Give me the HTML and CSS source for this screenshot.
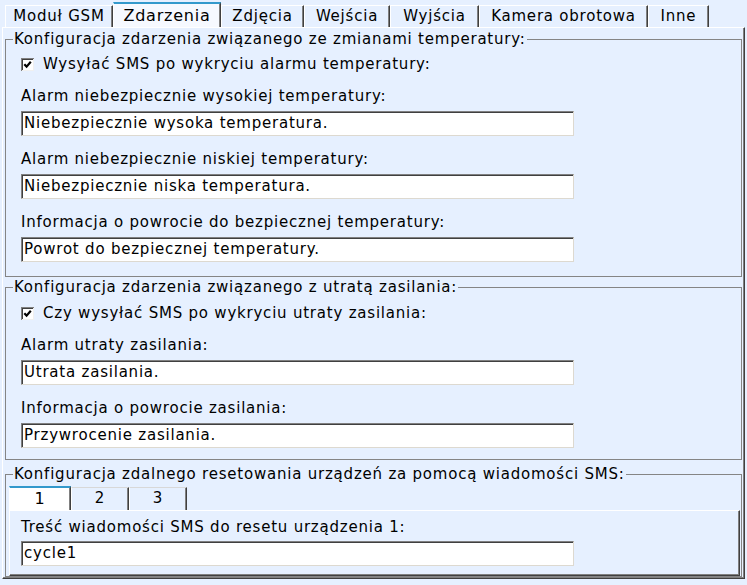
FILE: index.html
```html
<!DOCTYPE html>
<html lang="pl">
<head>
<meta charset="utf-8">
<title>Zdarzenia</title>
<link rel="stylesheet" href="styles.css">
</head>
<body>
<div class="tabs">
  <div class="tab t-gsm">Moduł GSM</div>
  <div class="tab t-events active">Zdarzenia</div>
  <div class="tab t-photos">Zdjęcia</div>
  <div class="tab t-inputs">Wejścia</div>
  <div class="tab t-outputs">Wyjścia</div>
  <div class="tab t-camera">Kamera obrotowa</div>
  <div class="tab t-other">Inne</div>
</div>
<div class="panel">
  <fieldset class="group g1">
    <legend>Konfiguracja zdarzenia związanego ze zmianami temperatury:</legend>
    <div class="body">
      <div class="check">
        <svg class="box" width="13" height="13" viewBox="0 0 13 13"><rect x="0" y="0" width="13" height="13" fill="#808080"/><rect x="1" y="1" width="12" height="12" fill="#f0f0f0"/><rect x="1" y="1" width="11" height="11" fill="#404040"/><rect x="2" y="2" width="10" height="10" fill="#fff"/><path d="M3.3 6.2 L5.6 8.6 L9.8 3.8" fill="none" stroke="#000" stroke-width="2.2"/></svg>
        <span>Wysyłać SMS po wykryciu alarmu temperatury:</span>
      </div>
      <div class="field">
        <div class="lbl">Alarm niebezpiecznie wysokiej temperatury:</div>
        <div class="input">Niebezpiecznie wysoka temperatura.</div>
      </div>
      <div class="field">
        <div class="lbl">Alarm niebezpiecznie niskiej temperatury:</div>
        <div class="input">Niebezpiecznie niska temperatura.</div>
      </div>
      <div class="field">
        <div class="lbl">Informacja o powrocie do bezpiecznej temperatury:</div>
        <div class="input">Powrot do bezpiecznej temperatury.</div>
      </div>
    </div>
  </fieldset>
  <fieldset class="group g2">
    <legend>Konfiguracja zdarzenia związanego z utratą zasilania:</legend>
    <div class="body">
      <div class="check">
        <svg class="box" width="13" height="13" viewBox="0 0 13 13"><rect x="0" y="0" width="13" height="13" fill="#808080"/><rect x="1" y="1" width="12" height="12" fill="#f0f0f0"/><rect x="1" y="1" width="11" height="11" fill="#404040"/><rect x="2" y="2" width="10" height="10" fill="#fff"/><path d="M3.3 6.2 L5.6 8.6 L9.8 3.8" fill="none" stroke="#000" stroke-width="2.2"/></svg>
        <span>Czy wysyłać SMS po wykryciu utraty zasilania:</span>
      </div>
      <div class="field">
        <div class="lbl">Alarm utraty zasilania:</div>
        <div class="input">Utrata zasilania.</div>
      </div>
      <div class="field">
        <div class="lbl">Informacja o powrocie zasilania:</div>
        <div class="input">Przywrocenie zasilania.</div>
      </div>
    </div>
  </fieldset>
  <fieldset class="group g3">
    <legend>Konfiguracja zdalnego resetowania urządzeń za pomocą wiadomości SMS:</legend>
    <div class="body3">
      <div class="subtabs">
        <div class="stab active">1</div>
        <div class="stab">2</div>
        <div class="stab">3</div>
      </div>
      <div class="subpanel">
        <div class="lbl">Treść wiadomości SMS do resetu urządzenia 1:</div>
        <div class="input">cycle1</div>
      </div>
    </div>
  </fieldset>
</div>
</body>
</html>
```

FILE: styles.css
```css
* {
  box-sizing: border-box;
}

html, body {
  margin: 0;
  padding: 0;
}

body {
  width: 747px;
  height: 585px;
  overflow: hidden;
  background: #e6f0ff;
  font-family: "DejaVu Sans", Verdana, sans-serif;
  font-size: 15px;
  letter-spacing: 0.78px;
  color: #000;
}

.tabs {
  display: flex;
  align-items: flex-end;
  height: 27px;
  padding-left: 5px;
}

.tab {
  flex: none;
  height: 22px;
  line-height: 20px;
  padding: 0;
  text-align: center;
  white-space: nowrap;
  background: #e6f0ff;
  border-top: 1px solid #fff;
  border-left: 1px solid #fff;
  border-right: 1px solid #404040;
  box-shadow: inset -1px 0 0 #808080;
}

.t-gsm { width: 108px; }
.t-events { width: 108px; }
.t-photos { width: 83px; }
.t-inputs { width: 86px; }
.t-outputs { width: 89px; }
.t-camera { width: 169px; }
.t-other { width: 61px; }

.tab.active {
  height: 25px;
  line-height: 23px;
  font-size: 16px;
  background: #f6f9ff;
  border-top: 2px solid #3399cc;
}

.panel {
  margin: 0 2px;
  padding: 2px 2px 1px 2px;
  border-top: 1px solid #fff;
  border-left: 1px solid #fff;
  border-right: 1px solid #404040;
  border-bottom: 1px solid #404040;
  box-shadow: inset -1px -1px 0 #808080;
}

.group {
  margin: 0;
  padding: 0;
  min-width: 0;
  border: 1px solid #858585;
}

.group legend {
  margin-left: 7px;
  padding: 0 1px;
  line-height: 18px;
}

.g2 {
  margin-top: 1px;
}

.g3 {
  margin-top: 5px;
}

.body {
  padding: 0 0 14px 15px;
}

.g2 .body {
  padding-bottom: 11px;
}

.check {
  display: flex;
  align-items: center;
  gap: 9px;
  margin-top: 7px;
  line-height: 18px;
}

.g2 .check {
  margin-top: 8px;
}

.box {
  display: block;
  flex: none;
}

.field {
  margin-top: 14px;
}

.lbl {
  line-height: 18px;
  white-space: nowrap;
}

.input {
  margin-top: 6px;
  width: 553px;
  height: 25px;
  padding-left: 2px;
  line-height: 22px;
  background: #fff;
  border: 1px solid;
  border-color: #808080 #ddd9d0 #ddd9d0 #808080;
  box-shadow: inset 1px 1px 0 #404040;
  white-space: nowrap;
}

.body3 {
  padding: 0 1px 0 3px;
}

.subtabs {
  display: flex;
  align-items: flex-end;
  height: 24px;
  margin-top: 3px;
}

.stab {
  width: 58px;
  height: 23px;
  line-height: 21px;
  text-align: center;
  background: #e6f0ff;
  border-top: 1px solid #d8d8d8;
  border-left: 1px solid #fff;
  border-right: 1px solid #404040;
  box-shadow: inset -1px 0 0 #808080;
}

.stab.active {
  width: 62px;
  height: 24px;
  line-height: 22px;
  font-size: 16px;
  background: #fff;
  border-top: 2px solid #3399cc;
}

.subpanel {
  padding: 7px 0 9px 11px;
  border-top: 1px solid #fff;
  border-left: 1px solid #fff;
  border-right: 1px solid #404040;
  border-bottom: 1px solid #404040;
  box-shadow: inset -1px -1px 0 #808080;
}

.subpanel .input {
  margin-top: 5px;
}
```
